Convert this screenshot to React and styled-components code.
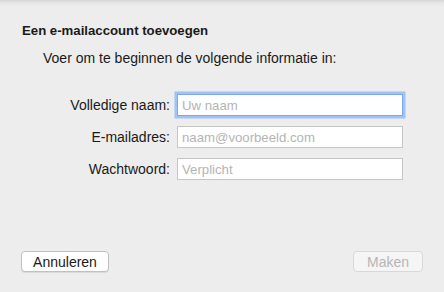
import React from "react";
import styled, { createGlobalStyle } from "styled-components";

const GlobalStyle = createGlobalStyle`
  html, body {
    margin: 0;
    padding: 0;
    background: #ededed;
  }
  * {
    box-sizing: border-box;
  }
`;

const Sheet = styled.div`
  width: 444px;
  height: 292px;
  display: flex;
  flex-direction: column;
  background: linear-gradient(to bottom, #d6d6d6 0px, #e6e6e6 3px, #ededed 7px);
  font-family: "Liberation Sans", Arial, sans-serif;
  color: #1a1a1a;
  padding: 23px 21px 20px 21px;
`;

const Title = styled.h1`
  margin: 0;
  font-size: 13.2px;
  line-height: 16px;
  font-weight: bold;
  padding-left: 1px;
`;

const Intro = styled.p`
  margin: 11px 0 0 22px;
  font-size: 14px;
  line-height: 16px;
`;

const Form = styled.div`
  display: grid;
  grid-template-columns: 149px 226px;
  column-gap: 7px;
  row-gap: 10px;
  margin-top: 28px;
  align-items: center;
`;

const Label = styled.label`
  font-size: 14px;
  text-align: right;
`;

const Field = styled.input`
  height: 22px;
  width: 226px;
  border: 1px solid ${(p) => (p.$focused ? "#7fa9e6" : "#c6c6c6")};
  background: #fff;
  font-family: "Liberation Sans", Arial, sans-serif;
  font-size: 13.2px;
  padding: 0 4px;
  outline: none;
  box-shadow: ${(p) => (p.$focused ? "0 0 0 2.5px #9fc3f6" : "none")};
  &::placeholder {
    color: #b4b4b4;
  }
`;

const Footer = styled.div`
  margin-top: auto;
  display: flex;
  justify-content: space-between;
`;

const Button = styled.button`
  height: 21px;
  min-width: ${(p) => p.$width}px;
  border-radius: 4px;
  border: 1px solid ${(p) => (p.disabled ? "#d8d8d8" : "#c0c0c0")};
  background: ${(p) => (p.disabled ? "#f5f5f5" : "#fff")};
  color: ${(p) => (p.disabled ? "#b6b6b6" : "#1a1a1a")};
  font-family: "Liberation Sans", Arial, sans-serif;
  font-size: 14px;
  padding: 0;
  box-shadow: ${(p) => (p.disabled ? "none" : "0 1px 0 rgba(0,0,0,0.08)")};
`;

export default function App() {
  return (
    <>
      <GlobalStyle />
      <Sheet>
        <Title>Een e-mailaccount toevoegen</Title>
        <Intro>Voer om te beginnen de volgende informatie in:</Intro>
        <Form>
          <Label>Volledige naam:</Label>
          <Field $focused placeholder="Uw naam" />
          <Label>E-mailadres:</Label>
          <Field placeholder="naam@voorbeeld.com" />
          <Label>Wachtwoord:</Label>
          <Field type="password" placeholder="Verplicht" />
        </Form>
        <Footer>
          <Button $width={88}>Annuleren</Button>
          <Button $width={70} disabled>
            Maken
          </Button>
        </Footer>
      </Sheet>
    </>
  );
}
